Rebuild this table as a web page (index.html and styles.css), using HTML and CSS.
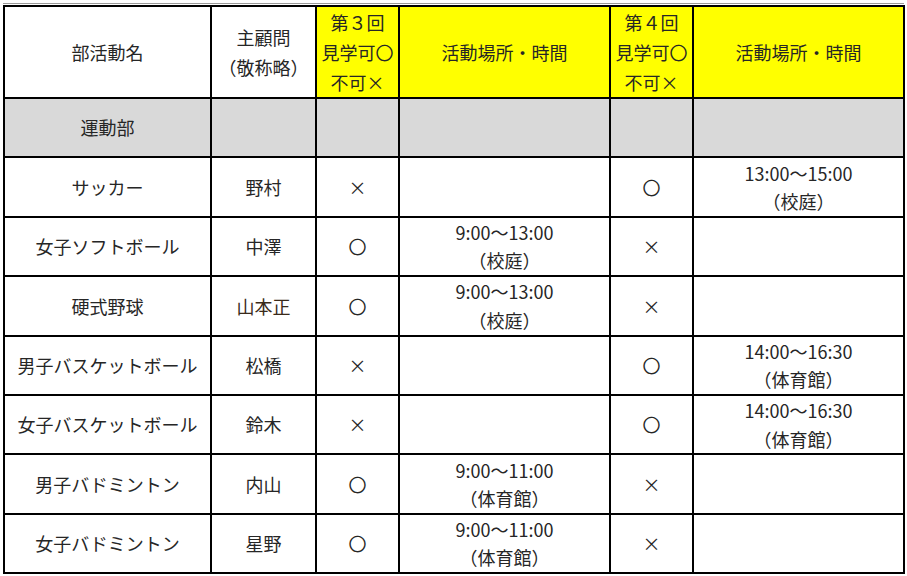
FILE: index.html
```html
<!DOCTYPE html>
<html lang="ja">
<head>
<meta charset="utf-8">
<link rel="stylesheet" href="styles.css">
</head>
<body>
<div class="sheet">
<table class="club">
<colgroup>
<col class="c1"><col class="c2"><col class="c3"><col class="c4"><col class="c5"><col class="c6">
</colgroup>
<thead>
<tr class="head">
<th>部活動名</th>
<th>主顧問<br>（敬称略）</th>
<th class="hl">第３回<br>見学可〇<br>不可×</th>
<th class="hl">活動場所・時間</th>
<th class="hl">第４回<br>見学可〇<br>不可×</th>
<th class="hl">活動場所・時間</th>
</tr>
</thead>
<tbody>
<tr class="cat"><td>運動部</td><td></td><td></td><td></td><td></td><td></td></tr>
<tr><td>サッカー</td><td>野村</td><td>×</td><td></td><td>〇</td><td>13:00～15:00<br>（校庭）</td></tr>
<tr><td>女子ソフトボール</td><td>中澤</td><td>〇</td><td>9:00～13:00<br>（校庭）</td><td>×</td><td></td></tr>
<tr><td>硬式野球</td><td class="red">山本正</td><td>〇</td><td>9:00～13:00<br>（校庭）</td><td>×</td><td></td></tr>
<tr><td>男子バスケットボール</td><td>松橋</td><td>×</td><td></td><td>〇</td><td>14:00～16:30<br>（体育館）</td></tr>
<tr><td>女子バスケットボール</td><td>鈴木</td><td>×</td><td></td><td>〇</td><td>14:00～16:30<br>（体育館）</td></tr>
<tr><td>男子バドミントン</td><td>内山</td><td>〇</td><td>9:00～11:00<br>（体育館）</td><td>×</td><td></td></tr>
<tr><td>女子バドミントン</td><td>星野</td><td>〇</td><td>9:00～11:00<br>（体育館）</td><td>×</td><td></td></tr>
</tbody>
</table>
</div>
</body>
</html>
```
FILE: styles.css
```css
html, body {
  margin: 0;
  padding: 0;
  background: #ffffff;
}
.sheet {
  margin: 3px 0 0 3px;
  width: 901px;
  border-top: 1px solid #9a9a9a;
  padding-top: 1px;
}
.club {
  border-collapse: collapse;
  table-layout: fixed;
  width: 900px;
  font-family: "Noto Sans CJK JP", "Noto Sans", sans-serif;
  font-size: 18px;
  color: #262626;
}
.c1 { width: 207px; }
.c2 { width: 105px; }
.c3 { width: 83px; }
.c4 { width: 211px; }
.c5 { width: 83px; }
.c6 { width: 211px; }
.club th, .club td {
  border: 2px solid #000;
  text-align: center;
  vertical-align: middle;
  padding: 0;
  font-weight: normal;
  line-height: 28.5px;
  white-space: nowrap;
}
.club .head th { height: 90px; line-height: 30px; }
.club .hl { background: #ffff00; }
.club tbody td { height: 57.4px; }
.club .cat td { background: #d9d9d9; }
.club .red { color: #3a2a1a; }
```
